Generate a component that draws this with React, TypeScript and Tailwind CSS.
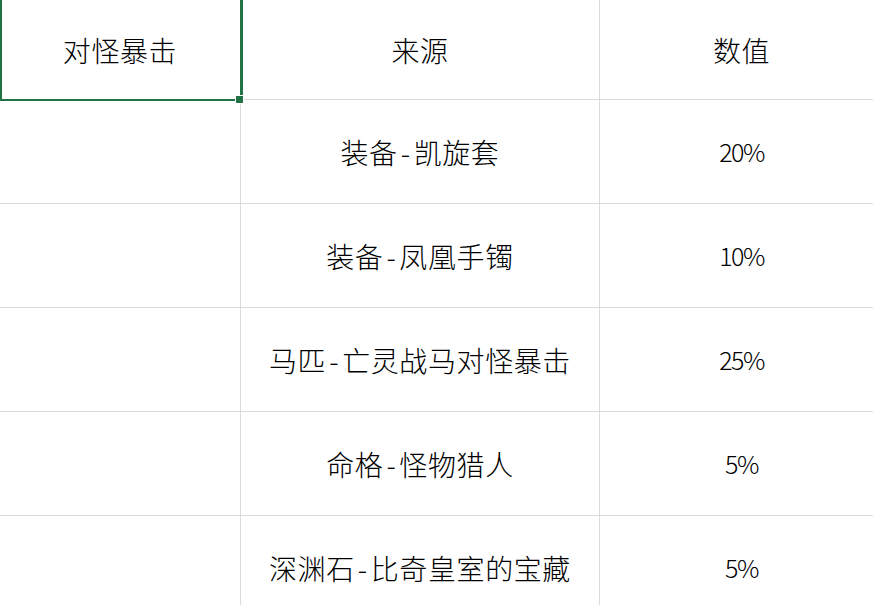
import React from "react";

const rows = [
  { kind: "装备", name: "凯旋套", value: "20%" },
  { kind: "装备", name: "凤凰手镯", value: "10%" },
  { kind: "马匹", name: "亡灵战马对怪暴击", value: "25%" },
  { kind: "命格", name: "怪物猎人", value: "5%" },
  { kind: "深渊石", name: "比奇皇室的宝藏", value: "5%" },
];

const font = { fontFamily: '"Noto Sans CJK SC", "Noto Sans", sans-serif' };

export default function App() {
  return (
    <div
      className="relative h-[605px] w-[873px] overflow-hidden bg-white text-[28px] font-light tracking-[0.6px] text-black"
      style={font}
    >
      <div className="grid w-[884px] grid-cols-[241px_359px_284px]">
        {/* header */}
        <div className="flex h-[100px] items-center justify-center border-b border-r border-[#dadada]">
          对怪暴击
        </div>
        <div className="flex h-[100px] items-center justify-center border-b border-r border-[#dadada]">
          来源
        </div>
        <div className="flex h-[100px] items-center justify-center border-b border-r border-[#dadada]">
          数值
        </div>

        {rows.map((row) => (
          <React.Fragment key={row.name}>
            <div className="h-[104px] border-b border-r border-[#dadada]" />
            <div className="flex h-[104px] items-center justify-center border-b border-r border-[#dadada]">
              {row.kind}
              <span className="mx-[3px]">-</span>
              {row.name}
            </div>
            <div className="flex h-[104px] items-center justify-center border-b border-r border-[#dadada] text-[25px] tracking-[-1.5px]">
              {row.value}
            </div>
          </React.Fragment>
        ))}
      </div>

      {/* selected cell */}
      <div className="absolute left-0 top-[-2px] h-[103px] w-[243px] border-2 border-r-[3px] border-[#217346]" />
      <div className="absolute left-[235px] top-[95px] h-[9px] w-[9px] border border-white bg-[#217346]" />
    </div>
  );
}
